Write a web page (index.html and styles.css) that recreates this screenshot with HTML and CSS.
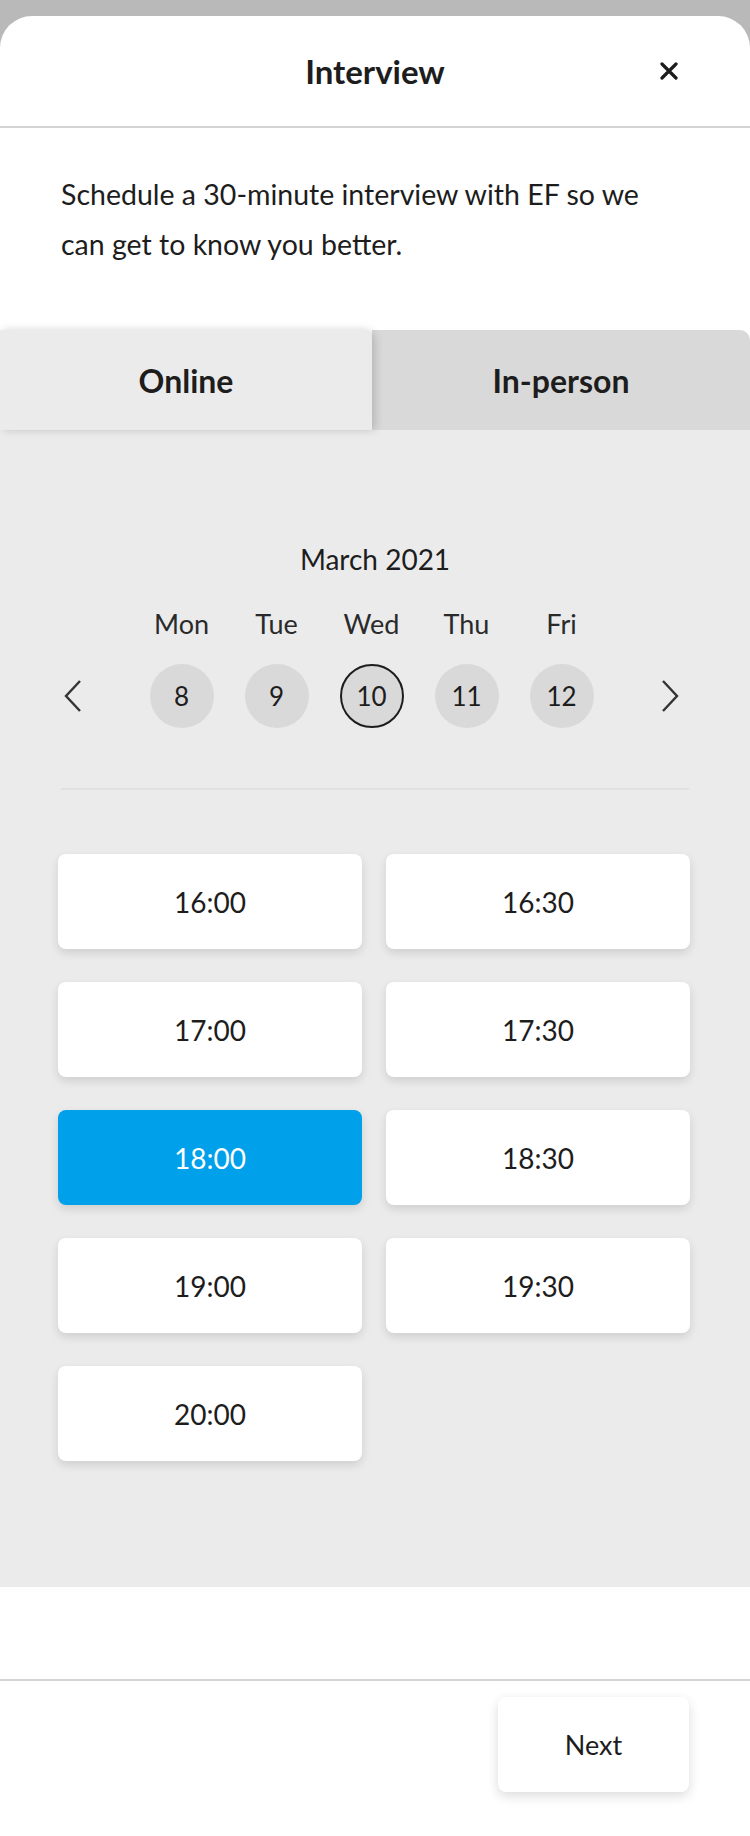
FILE: index.html
```html
<!DOCTYPE html>
<html lang="en">
<head>
    <meta charset="UTF-8">
    <meta name="viewport" content="width=device-width, initial-scale=1.0">
    <title>Interview</title>
    <link rel="stylesheet" href="styles.css">
</head>
<body>
    <div class="sheet">
        <div class="header">
            <h1>Interview</h1>
            <button class="close-button" aria-label="Close">
                <svg width="18" height="18" viewBox="0 0 18 18">
                    <path d="M2 2 L16 16 M16 2 L2 16" stroke="#1d1d1d" stroke-width="3.2" stroke-linecap="round" fill="none"/>
                </svg>
            </button>
        </div>

        <p class="intro">Schedule a 30-minute interview with EF so we can get to know you better.</p>

        <div class="tabs">
            <div class="tab tab-active">Online</div>
            <div class="tab">In-person</div>
        </div>

        <div class="panel">
            <div class="month">March 2021</div>
            <div class="week">
                <button class="arrow" aria-label="Previous week">
                    <svg width="18" height="34" viewBox="0 0 18 34">
                        <path d="M16 2 L2 17 L16 32" stroke="#333" stroke-width="2.4" fill="none"/>
                    </svg>
                </button>
                <div class="days">
                    <div class="day"><span class="day-name">Mon</span><span class="date">8</span></div>
                    <div class="day"><span class="day-name">Tue</span><span class="date">9</span></div>
                    <div class="day"><span class="day-name">Wed</span><span class="date date-selected">10</span></div>
                    <div class="day"><span class="day-name">Thu</span><span class="date">11</span></div>
                    <div class="day"><span class="day-name">Fri</span><span class="date">12</span></div>
                </div>
                <button class="arrow" aria-label="Next week">
                    <svg width="18" height="34" viewBox="0 0 18 34">
                        <path d="M2 2 L16 17 L2 32" stroke="#333" stroke-width="2.4" fill="none"/>
                    </svg>
                </button>
            </div>

            <div class="divider"></div>

            <div class="slots">
                <button class="slot">16:00</button>
                <button class="slot">16:30</button>
                <button class="slot">17:00</button>
                <button class="slot">17:30</button>
                <button class="slot slot-selected">18:00</button>
                <button class="slot">18:30</button>
                <button class="slot">19:00</button>
                <button class="slot">19:30</button>
                <button class="slot">20:00</button>
            </div>
        </div>

        <div class="footer">
            <button class="next-button">Next</button>
        </div>
    </div>
</body>
</html>
```

FILE: styles.css
```css
body {
    margin: 0;
    background: #b9b9b9;
    font-family: Lato, "Noto Sans", sans-serif;
    color: #1d1d1d;
}
button {
    font-family: inherit;
    color: inherit;
    border: none;
    background: none;
    padding: 0;
    cursor: pointer;
}
.sheet {
    margin-top: 16px;
    background: white;
    border-radius: 32px 32px 0 0;
    overflow: hidden;
}
.header {
    height: 110px;
    display: flex;
    align-items: center;
    justify-content: center;
    border-bottom: 2px solid #d4d4d4;
    position: relative;
}
.header h1 {
    margin: 0;
    font-size: 33px;
    font-weight: bold;
}
.close-button {
    position: absolute;
    right: 72px;
    top: 46px;
    width: 18px;
    height: 18px;
}
.intro {
    margin: 41px 0 0;
    padding: 0 90px 0 61px;
    font-size: 28.5px;
    line-height: 50px;
}
.tabs {
    display: flex;
    margin-top: 61px;
    height: 100px;
}
.tab {
    flex: 1;
    display: flex;
    align-items: center;
    justify-content: center;
    font-size: 32px;
    font-weight: bold;
    background: #d9d9d9;
    border-radius: 0 10px 0 0;
}
.tab-active {
    flex: 0 0 372px;
    background: #ebebeb;
    position: relative;
    z-index: 1;
    box-shadow: 3px 0 9px rgba(0, 0, 0, 0.17);
}
.panel {
    background: #ebebeb;
    padding: 113px 0 126px;
}
.month {
    text-align: center;
    font-size: 28px;
    line-height: 32px;
}
.week {
    display: flex;
    align-items: flex-end;
    padding: 0 71px 0 64px;
    margin-top: 33px;
}
.arrow {
    width: 18px;
    height: 34px;
    margin-bottom: 15px;
}
.days {
    flex: 1;
    display: flex;
    justify-content: center;
}
.day {
    width: 95px;
    display: flex;
    flex-direction: column;
    align-items: center;
    gap: 24px;
}
.day-name {
    font-size: 27px;
    line-height: 32px;
    color: #2a2a2a;
}
.date {
    width: 64px;
    height: 64px;
    border-radius: 50%;
    background: #d9d9d9;
    display: flex;
    align-items: center;
    justify-content: center;
    font-size: 26px;
    box-sizing: border-box;
}
.date-selected {
    border: 2px solid #1d1d1d;
}
.divider {
    height: 2px;
    background: #e1e1e1;
    margin: 60px 61px 0;
}
.slots {
    display: grid;
    grid-template-columns: 304px 304px;
    column-gap: 24px;
    row-gap: 33px;
    padding: 0 61px 0 58px;
    margin-top: 64px;
}
.slot {
    height: 95px;
    background: white;
    border-radius: 8px;
    box-shadow: 0 4px 10px rgba(0, 0, 0, 0.12);
    font-size: 28px;
}
.slot-selected {
    background: #00a0ea;
    color: white;
}
.footer {
    margin-top: 92px;
    border-top: 2px solid #d4d4d4;
    height: 157px;
    display: flex;
    justify-content: flex-end;
    align-items: flex-start;
    padding: 16px 61px 0 0;
    box-sizing: border-box;
}
.next-button {
    width: 191px;
    height: 95px;
    background: white;
    border-radius: 8px;
    box-shadow: 0 4px 12px rgba(0, 0, 0, 0.14);
    font-size: 27px;
}
```
